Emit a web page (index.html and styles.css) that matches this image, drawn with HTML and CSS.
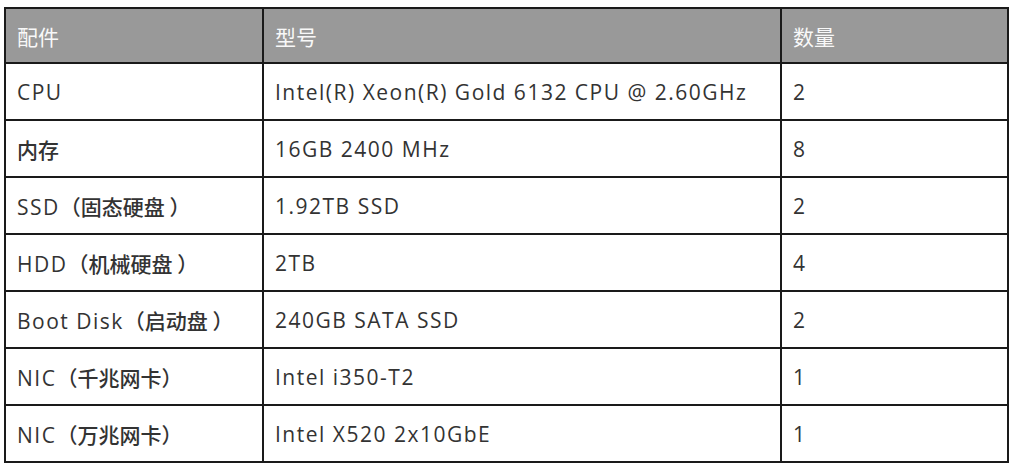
FILE: index.html
```html
<!DOCTYPE html>
<html lang="zh">
<head>
<meta charset="utf-8">
<title>配置</title>
<link rel="stylesheet" href="styles.css">
</head>
<body>
<table class="spec">
  <colgroup>
    <col class="c1"><col class="c2"><col class="c3">
  </colgroup>
  <thead>
    <tr><th><span class="zh">配件</span></th><th><span class="zh">型号</span></th><th><span class="zh">数量</span></th></tr>
  </thead>
  <tbody>
    <tr><td>CPU</td><td>Intel(R) Xeon(R) Gold 6132 CPU @ 2.60GHz</td><td>2</td></tr>
    <tr><td><span class="zh b">内存</span></td><td>16GB 2400 MHz</td><td>8</td></tr>
    <tr><td>SSD<span class="zh b">（固态硬盘 ）</span></td><td>1.92TB SSD</td><td>2</td></tr>
    <tr><td>HDD<span class="zh b">（机械硬盘 ）</span></td><td>2TB</td><td>4</td></tr>
    <tr><td>Boot Disk<span class="zh b">（启动盘 ）</span></td><td>240GB SATA SSD</td><td>2</td></tr>
    <tr><td>NIC<span class="zh b">（千兆网卡）</span></td><td>Intel i350-T2</td><td>1</td></tr>
    <tr><td>NIC<span class="zh b">（万兆网卡）</span></td><td>Intel X520 2x10GbE</td><td>1</td></tr>
  </tbody>
</table>
</body>
</html>
```
FILE: styles.css
```css
html, body {
  margin: 0;
  background: #ffffff;
}
body {
  padding: 7px 0 0 4px;
  font-family: "Open Sans", "Noto Sans CJK SC", sans-serif;
  font-size: 21px;
  color: #333333;
}
.spec {
  border-collapse: collapse;
  width: 1003px;
  table-layout: fixed;
}
.c1 { width: 258px; }
.c2 { width: 518px; }
.c3 { width: 227px; }
.spec th, .spec td {
  border: 2px solid #1a1a1a;
  padding: 0 11px;
  text-align: left;
  vertical-align: middle;
  white-space: nowrap;
  letter-spacing: 1.5px;
}
.spec th {
  background: #999999;
  color: #f8f8f8;
  font-weight: 400;
  height: 53px;
}
.spec td {
  height: 55px;
}
.zh {
  font-family: "Noto Sans CJK SC", sans-serif;
  letter-spacing: 0;
}
.zh.b {
  font-weight: 500;
}
```
